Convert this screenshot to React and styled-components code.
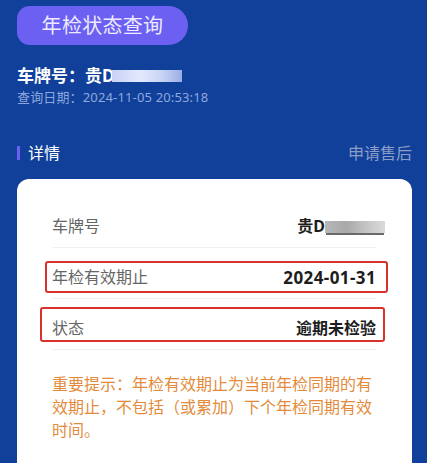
import React from 'react'
import styled, { createGlobalStyle } from 'styled-components'

const GlobalStyle = createGlobalStyle`
  html, body {
    margin: 0;
    padding: 0;
    background: #10409a;
  }
  body {
    font-family: "Noto Sans", "Noto Sans CJK SC", sans-serif;
  }
`

const rows = [
  { label: '车牌号', value: '贵D', masked: true },
  { label: '年检有效期止', value: '2024-01-31', latin: true, box: { left: -7, right: -12, top: 13, height: 32 } },
  { label: '状态', value: '逾期未检验', box: { left: -12, right: -9, top: 8, height: 35 } },
]

function App() {
  return (
    <Page>
      <GlobalStyle />
      <TitlePill>年检状态查询</TitlePill>

      <PlateLine>
        车牌号：贵D<HeaderMask />
      </PlateLine>
      <DateLine>查询日期：2024-11-05 20:53:18</DateLine>

      <SectionHead>
        <SectionTitle>详情</SectionTitle>
        <AfterSale>申请售后</AfterSale>
      </SectionHead>

      <Card>
        {rows.map(row => (
          <Row key={row.label}>
            <Label>{row.label}</Label>
            <Value $latin={row.latin}>
              {row.value}
              {row.masked && <ValueMask />}
            </Value>
            {row.box && (
              <Highlight
                $left={row.box.left}
                $right={row.box.right}
                $top={row.box.top}
                $height={row.box.height}
              />
            )}
          </Row>
        ))}
        <Notice>
          重要提示：年检有效期止为当前年检同期的有效期止，不包括（或累加）下个年检同期有效时间。
        </Notice>
      </Card>
    </Page>
  )
}

export default App

const Page = styled.div`
  min-height: 463px;
  box-sizing: border-box;
  padding: 6px 15px 0 17px;
  display: flex;
  flex-direction: column;
  align-items: flex-start;
  overflow: hidden;
`

const TitlePill = styled.div`
  width: 171px;
  height: 39px;
  display: flex;
  align-items: center;
  justify-content: center;
  background: #6b60f1;
  border-radius: 13px 20px 20px 13px;
  color: #eeeaff;
  font-size: 20px;
  line-height: 1;
  letter-spacing: 0.3px;
`

const PlateLine = styled.div`
  margin-top: 21px;
  color: #ffffff;
  font-size: 17px;
  font-weight: 700;
  line-height: 20px;
  display: flex;
  align-items: center;
`

const HeaderMask = styled.span`
  display: inline-block;
  margin-left: -2px;
  width: 70px;
  height: 12px;
  background: linear-gradient(90deg, #c9d2f6 0%, #e3e8fc 40%, #cad4f6 70%, #9aaee6 100%);
  filter: blur(0.6px);
`

const DateLine = styled.div`
  margin-top: 2px;
  color: #8ea8dc;
  font-size: 13px;
  line-height: 18px;
  letter-spacing: 0.15px;
`

const SectionHead = styled.div`
  align-self: stretch;
  margin-top: 36px;
  display: flex;
  align-items: center;
  justify-content: space-between;
  height: 22px;
`

const SectionTitle = styled.div`
  display: flex;
  align-items: center;
  gap: 8px;
  color: #ffffff;
  font-size: 16px;
  line-height: 22px;

  &::before {
    content: '';
    width: 3px;
    height: 14px;
    background: #6b60f1;
  }
`

const AfterSale = styled.div`
  color: #8c9dc6;
  font-size: 16px;
  line-height: 22px;
`

const Card = styled.div`
  align-self: stretch;
  margin-top: 15px;
  flex: 1;
  background: #ffffff;
  border-radius: 12px 12px 0 0;
  padding: 18px 36px 30px 35px;
  display: flex;
  flex-direction: column;
`

const Row = styled.div`
  position: relative;
  display: flex;
  justify-content: space-between;
  align-items: center;
  padding: 19px 0 10px;
  height: 21px;
  border-bottom: 1px solid #f0f0f0;
  font-size: 16px;
`

const Label = styled.span`
  color: #666666;
  line-height: 21px;
`

const Value = styled.span`
  display: flex;
  align-items: center;
  color: #1d1d1d;
  font-weight: 700;
  line-height: 21px;
  font-size: ${p => (p.$latin ? '17px' : '16px')};
  letter-spacing: ${p => (p.$latin ? '0.4px' : '0')};
`

const ValueMask = styled.span`
  display: inline-block;
  margin-right: -9px;
  width: 60px;
  height: 12px;
  background: linear-gradient(90deg, #b8b8b8 0%, #a8a8a8 35%, #c2c2c2 65%, #dadada 100%);
  box-shadow: 0 3px 0 -1px #6a6a6a;
`

const Highlight = styled.div`
  position: absolute;
  left: ${p => p.$left}px;
  right: ${p => p.$right}px;
  top: ${p => p.$top}px;
  height: ${p => p.$height}px;
  border: 2px solid #d8322c;
  border-radius: 3px;
  box-sizing: border-box;
  pointer-events: none;
`

const Notice = styled.p`
  margin: 23px 0 0;
  color: #e38b3b;
  font-size: 16px;
  line-height: 23px;
`
